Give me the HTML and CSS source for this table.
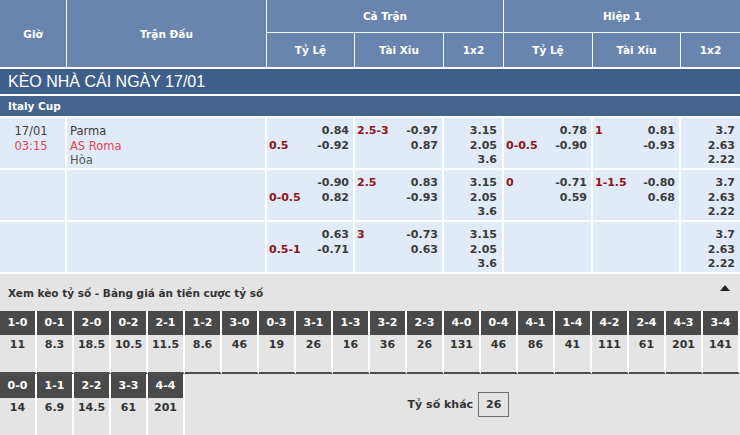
FILE: index.html
```html
<!DOCTYPE html>
<html lang="vi">
<head>
<meta charset="utf-8">
<title>Kèo nhà cái</title>
<link rel="stylesheet" href="styles.css">
</head>
<body>
<div class="page">
  <div class="thead">
    <div class="th span2">Giờ</div>
    <div class="th span2">Trận Đấu</div>
    <div class="th grp g1">Cả Trận</div>
    <div class="th grp g2 last">Hiệp 1</div>
    <div class="th sub">Tỷ Lệ</div>
    <div class="th sub">Tài Xỉu</div>
    <div class="th sub">1x2</div>
    <div class="th sub">Tỷ Lệ</div>
    <div class="th sub">Tài Xỉu</div>
    <div class="th sub last">1x2</div>
  </div>

  <div class="title">KÈO NHÀ CÁI NGÀY 17/01</div>
  <div class="league">Italy Cup</div>

  <div class="row">
    <div class="cell time"><div>17/01</div><div class="red">03:15</div></div>
    <div class="cell match"><div>Parma</div><div class="red">AS Roma</div><div class="draw">Hòa</div></div>
    <div class="cell odds"><div class="hc"><div></div><div>0.5</div></div><div class="vals"><div>0.84</div><div>-0.92</div></div></div>
    <div class="cell odds"><div class="hc"><div>2.5-3</div><div></div></div><div class="vals"><div>-0.97</div><div>0.87</div></div></div>
    <div class="cell x12"><div>3.15</div><div>2.05</div><div>3.6</div></div>
    <div class="cell odds"><div class="hc"><div></div><div>0-0.5</div></div><div class="vals"><div>0.78</div><div>-0.90</div></div></div>
    <div class="cell odds"><div class="hc"><div>1</div><div></div></div><div class="vals"><div>0.81</div><div>-0.93</div></div></div>
    <div class="cell x12 last"><div>3.7</div><div>2.63</div><div>2.22</div></div>
  </div>

  <div class="row">
    <div class="cell time"></div>
    <div class="cell match"></div>
    <div class="cell odds"><div class="hc"><div></div><div>0-0.5</div></div><div class="vals"><div>-0.90</div><div>0.82</div></div></div>
    <div class="cell odds"><div class="hc"><div>2.5</div><div></div></div><div class="vals"><div>0.83</div><div>-0.93</div></div></div>
    <div class="cell x12"><div>3.15</div><div>2.05</div><div>3.6</div></div>
    <div class="cell odds"><div class="hc"><div>0</div><div></div></div><div class="vals"><div>-0.71</div><div>0.59</div></div></div>
    <div class="cell odds"><div class="hc"><div>1-1.5</div><div></div></div><div class="vals"><div>-0.80</div><div>0.68</div></div></div>
    <div class="cell x12 last"><div>3.7</div><div>2.63</div><div>2.22</div></div>
  </div>

  <div class="row">
    <div class="cell time"></div>
    <div class="cell match"></div>
    <div class="cell odds"><div class="hc"><div></div><div>0.5-1</div></div><div class="vals"><div>0.63</div><div>-0.71</div></div></div>
    <div class="cell odds"><div class="hc"><div>3</div><div></div></div><div class="vals"><div>-0.73</div><div>0.63</div></div></div>
    <div class="cell x12"><div>3.15</div><div>2.05</div><div>3.6</div></div>
    <div class="cell odds"></div>
    <div class="cell odds"></div>
    <div class="cell x12 last"><div>3.7</div><div>2.63</div><div>2.22</div></div>
  </div>

  <div class="scores">
    <div class="scores-head">
      <span>Xem kèo tỷ số - Bảng giá ăn tiền cược tỷ số</span>
      <span class="tri"></span>
    </div>
    <div class="sgrid r1">
      <div class="sc"><div class="sh">1-0</div><div class="sv">11</div></div>
      <div class="sc"><div class="sh">0-1</div><div class="sv">8.3</div></div>
      <div class="sc"><div class="sh">2-0</div><div class="sv">18.5</div></div>
      <div class="sc"><div class="sh">0-2</div><div class="sv">10.5</div></div>
      <div class="sc"><div class="sh">2-1</div><div class="sv">11.5</div></div>
      <div class="sc"><div class="sh">1-2</div><div class="sv">8.6</div></div>
      <div class="sc"><div class="sh">3-0</div><div class="sv">46</div></div>
      <div class="sc"><div class="sh">0-3</div><div class="sv">19</div></div>
      <div class="sc"><div class="sh">3-1</div><div class="sv">26</div></div>
      <div class="sc"><div class="sh">1-3</div><div class="sv">16</div></div>
      <div class="sc"><div class="sh">3-2</div><div class="sv">36</div></div>
      <div class="sc"><div class="sh">2-3</div><div class="sv">26</div></div>
      <div class="sc"><div class="sh">4-0</div><div class="sv">131</div></div>
      <div class="sc"><div class="sh">0-4</div><div class="sv">46</div></div>
      <div class="sc"><div class="sh">4-1</div><div class="sv">86</div></div>
      <div class="sc"><div class="sh">1-4</div><div class="sv">41</div></div>
      <div class="sc"><div class="sh">4-2</div><div class="sv">111</div></div>
      <div class="sc"><div class="sh">2-4</div><div class="sv">61</div></div>
      <div class="sc"><div class="sh">4-3</div><div class="sv">201</div></div>
      <div class="sc"><div class="sh">3-4</div><div class="sv">141</div></div>
    </div>
    <div class="sgrid r2">
      <div class="sc"><div class="sh">0-0</div><div class="sv">14</div></div>
      <div class="sc"><div class="sh">1-1</div><div class="sv">6.9</div></div>
      <div class="sc"><div class="sh">2-2</div><div class="sv">14.5</div></div>
      <div class="sc"><div class="sh">3-3</div><div class="sv">61</div></div>
      <div class="sc"><div class="sh">4-4</div><div class="sv">201</div></div>
      <div class="other"><span>Tỷ số khác</span><span class="obox">26</span></div>
    </div>
  </div>
</div>
</body>
</html>
```

FILE: styles.css
```css
* { box-sizing: border-box; margin: 0; padding: 0; }
html, body { width: 740px; height: 435px; overflow: hidden; background: #ffffff; }
body { font-family: "DejaVu Sans", Verdana, sans-serif; font-size: 11px; color: #3a3a3a; }

.page { width: 740px; }

.thead {
  display: grid;
  grid-template-columns: 67px 200px 88px 89px 60px 89px 88px 59px;
  grid-template-rows: 33px 34px;
  background: #6a85ad;
}
.th {
  color: #fff;
  font-weight: bold;
  font-size: 10.5px;
  display: flex;
  align-items: center;
  justify-content: center;
  border-right: 1px solid #f2f5fa;
}
.th.last { border-right: none; }
.th.span2 { grid-row: 1 / 3; }
.th.g1 { grid-column: 3 / 6; border-bottom: 1px solid #f2f5fa; }
.th.g2 { grid-column: 6 / 9; border-bottom: 1px solid #f2f5fa; }

.title {
  margin-top: 2px;
  height: 25px;
  background: #3f5f8b;
  color: #fff;
  font-family: "Liberation Sans", Arial, sans-serif;
  font-size: 16px;
  line-height: 25px;
  padding-left: 8px;
}
.league {
  margin-top: 2px;
  height: 22px;
  background: #45648e;
  color: #fff;
  font-weight: bold;
  font-size: 10.5px;
  line-height: 20px;
  padding-left: 8px;
  border-bottom: 2px solid #fff;
}

.row {
  display: grid;
  grid-template-columns: 67px 200px 88px 89px 60px 89px 88px 59px;
  height: 52px;
}
.cell {
  background: #e1eaf8;
  border-right: 2px solid #fff;
  border-bottom: 2px solid #fff;
  padding-top: 6px;
  line-height: 14.5px;
  font-weight: bold;
}
.cell.last { border-right: none; }
.time { text-align: center; font-weight: normal; font-size: 11.5px; padding-right: 3px; }
.match { padding-left: 3px; font-weight: normal; font-size: 11.5px; }
.red { color: #e0474f; }
.draw { color: #555; }

.odds { display: flex; justify-content: space-between; padding-left: 2px; padding-right: 4px; }
.hc { color: #8e1616; }
.hc div, .vals div { height: 14.5px; }
.vals { text-align: right; }
.x12 { text-align: right; padding-right: 5px; }

.scores { background: #e4e4e4; height: 161px; }
.scores-head {
  height: 37px;
  display: flex;
  align-items: center;
  justify-content: space-between;
  padding: 0 10px 0 8px;
  font-weight: bold;
  font-size: 10.5px;
  color: #333;
}
.tri {
  width: 0; height: 0;
  border-left: 5px solid transparent;
  border-right: 5px solid transparent;
  border-bottom: 6px solid #222;
  margin-top: -9px;
}
.sgrid { display: grid; grid-template-columns: repeat(20, 37px); }
.sgrid.r2 { grid-template-columns: repeat(5, 37px) 1fr; }
.sc { border-right: 2px solid #fff; }
.r1 .sc { border-bottom: 2px solid #4d4d4d; }
.sh {
  height: 24px;
  line-height: 24px;
  background: #4a4a4a;
  color: #fff;
  text-align: center;
  font-weight: bold;
}
.sv {
  height: 37px;
  padding-top: 2px;
  line-height: 15px;
  text-align: center;
  font-weight: bold;
  color: #333;
}
.other {
  display: flex;
  align-items: center;
  justify-content: center;
  font-weight: bold;
  color: #333;
  gap: 5px;
  padding-right: 8px;
}
.obox {
  border: 1px solid #6e6e6e;
  height: 25px;
  line-height: 23px;
  padding: 0 7px;
}
```
